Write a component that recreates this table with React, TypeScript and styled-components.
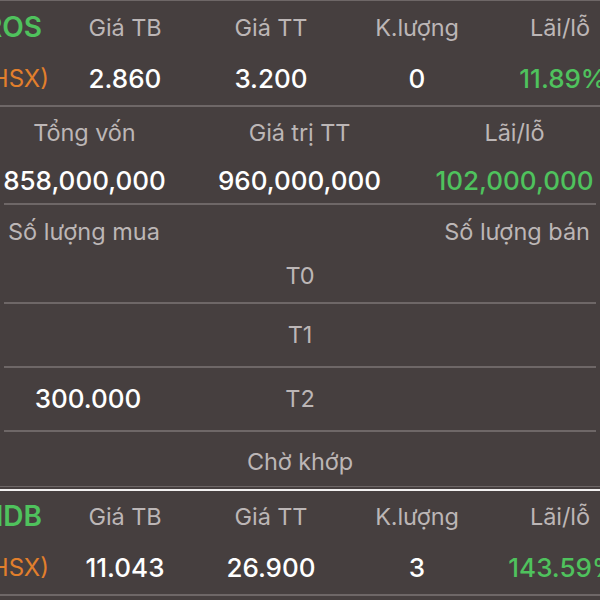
import React from "react";
import styled, { createGlobalStyle } from "styled-components";

const GlobalStyle = createGlobalStyle`
  html, body {
    margin: 0;
    padding: 0;
    background: #463f3f;
  }
  body {
    font-family: Inter, "Noto Sans", "Liberation Sans", sans-serif;
  }
`;

const colors = {
  bg: "#463f3f",
  label: "#bcb6b6",
  value: "#ffffff",
  green: "#4fc25d",
  orange: "#e27f2c",
  line: "#6e6767",
};

interface Holding {
  code: string;
  exchange: string;
  avgPrice: string;
  marketPrice: string;
  volume: string;
  profit: string;
}

const holdings: Holding[] = [
  { code: "ROS", exchange: "(HSX)", avgPrice: "2.860", marketPrice: "3.200", volume: "0", profit: "11.89%" },
  { code: "HDB", exchange: "(HSX)", avgPrice: "11.043", marketPrice: "26.900", volume: "3", profit: "143.59%" },
];

const settlement = [
  { label: "T0", buy: "", height: 47, shift: -6 },
  { label: "T1", buy: "", height: 62, shift: -2 },
  { label: "T2", buy: "300.000", height: 62, shift: -2 },
  { label: "Chờ khớp", buy: "", height: 54, shift: 4 },
];

function StockBlock({ item, first }: { item: Holding; first?: boolean }) {
  return (
    <Block $first={first}>
      <StockRow $height={50}>
        <CodeCell $color={colors.green} $weight={600} $size={28} $end={10}>{item.code}</CodeCell>
        <Cell>Giá TB</Cell>
        <Cell>Giá TT</Cell>
        <Cell>K.lượng</Cell>
        <Cell $align="end">Lãi/lỗ</Cell>
      </StockRow>
      <StockRow $height={53}>
        <CodeCell $color={colors.orange} $weight={400} $size={24} $end={3}>{item.exchange}</CodeCell>
        <Value>{item.avgPrice}</Value>
        <Value>{item.marketPrice}</Value>
        <Value>{item.volume}</Value>
        <Value $color={colors.green} $weight={500}>{item.profit}</Value>
      </StockRow>
    </Block>
  );
}

export default function App() {
  const [ros, hdb] = holdings;
  return (
    <>
      <GlobalStyle />
      <Screen>
        <StockBlock item={ros} first />

        <Detail>
          <SummaryRow $height={51}>
            <Cell>Tổng vốn</Cell>
            <Cell>Giá trị TT</Cell>
            <Cell>Lãi/lỗ</Cell>
          </SummaryRow>
          <SummaryRow $height={45}>
            <Value>858,000,000</Value>
            <Value>960,000,000</Value>
            <Value $color={colors.green} $weight={500}>102,000,000</Value>
          </SummaryRow>
          <Divider />

          <SideHeader>
            <SideLabel>Số lượng mua</SideLabel>
            <SideLabel>Số lượng bán</SideLabel>
          </SideHeader>
          {settlement.map((row, i) => (
            <React.Fragment key={row.label}>
              <SettleRow $height={row.height} $shift={row.shift}>
                <BuyValue>{row.buy}</BuyValue>
                <Cell>{row.label}</Cell>
                <span />
              </SettleRow>
              {i < settlement.length - 1 && <Divider />}
            </React.Fragment>
          ))}
        </Detail>

        <Separator />
        <StockBlock item={hdb} />
      </Screen>
    </>
  );
}

const Screen = styled.div`
  width: 600px;
  height: 600px;
  overflow: hidden;
  background: ${colors.bg};
  display: flex;
  flex-direction: column;
`;

const Block = styled.section<{ $first?: boolean }>`
  flex-shrink: 0;
  padding-top: ${(p) => (p.$first ? "1px" : "0")};
  border-top: ${(p) => (p.$first ? `1px solid ${colors.line}` : "none")};
  border-bottom: 2px solid ${colors.line};
`;

const StockRow = styled.div<{ $height: number }>`
  height: ${(p) => p.$height}px;
  margin-left: -20px;
  display: grid;
  grid-template-columns: 72px 146px 146px 146px 146px;
  align-items: center;
`;

const Cell = styled.div<{ $align?: "center" | "end" }>`
  display: flex;
  justify-content: center;
  padding-right: ${(p) => (p.$align === "end" ? "6px" : "0")};
  font-size: 23.5px;
  color: ${colors.label};
  white-space: nowrap;
  letter-spacing: -0.1px;
`;

const CodeCell = styled.div<{ $color: string; $weight: number; $size: number; $end: number }>`
  display: flex;
  justify-content: flex-end;
  padding-right: ${(p) => p.$end}px;
  font-size: ${(p) => p.$size}px;
  font-weight: ${(p) => p.$weight};
  color: ${(p) => p.$color};
  white-space: nowrap;
`;

const Value = styled.div<{ $color?: string; $weight?: number }>`
  display: flex;
  justify-content: center;
  font-size: 26px;
  font-weight: ${(p) => p.$weight ?? 500};
  color: ${(p) => p.$color ?? colors.value};
  white-space: nowrap;
`;

const Detail = styled.section`
  flex-shrink: 0;
  display: flex;
  flex-direction: column;
`;

const SummaryRow = styled.div<{ $height: number }>`
  height: ${(p) => p.$height}px;
  margin: 0 -23px;
  display: grid;
  grid-template-columns: repeat(3, 215px);
  align-items: center;
`;

const Divider = styled.div`
  flex-shrink: 0;
  height: 2px;
  margin: 0 4px;
  background: ${colors.line};
`;

const SideHeader = styled.div`
  height: 50px;
  box-sizing: border-box;
  padding: 3px 10px 0 8px;
  display: flex;
  justify-content: space-between;
  align-items: center;
`;

const SideLabel = styled.span`
  font-size: 23.5px;
  color: ${colors.label};
`;

const SettleRow = styled.div<{ $height: number; $shift: number }>`
  height: ${(p) => p.$height}px;
  box-sizing: border-box;
  padding-top: ${(p) => Math.max(p.$shift, 0)}px;
  padding-bottom: ${(p) => Math.max(-p.$shift, 0)}px;
  display: grid;
  grid-template-columns: 176px 248px 176px;
  align-items: center;
`;

const BuyValue = styled.div`
  display: flex;
  justify-content: center;
  font-size: 26px;
  font-weight: 500;
  color: ${colors.value};
`;

const Separator = styled.div`
  flex-shrink: 0;
  height: 5px;
  box-sizing: border-box;
  border-top: 1px solid ${colors.line};
  border-bottom: 2px solid #f2f0f0;
`;
